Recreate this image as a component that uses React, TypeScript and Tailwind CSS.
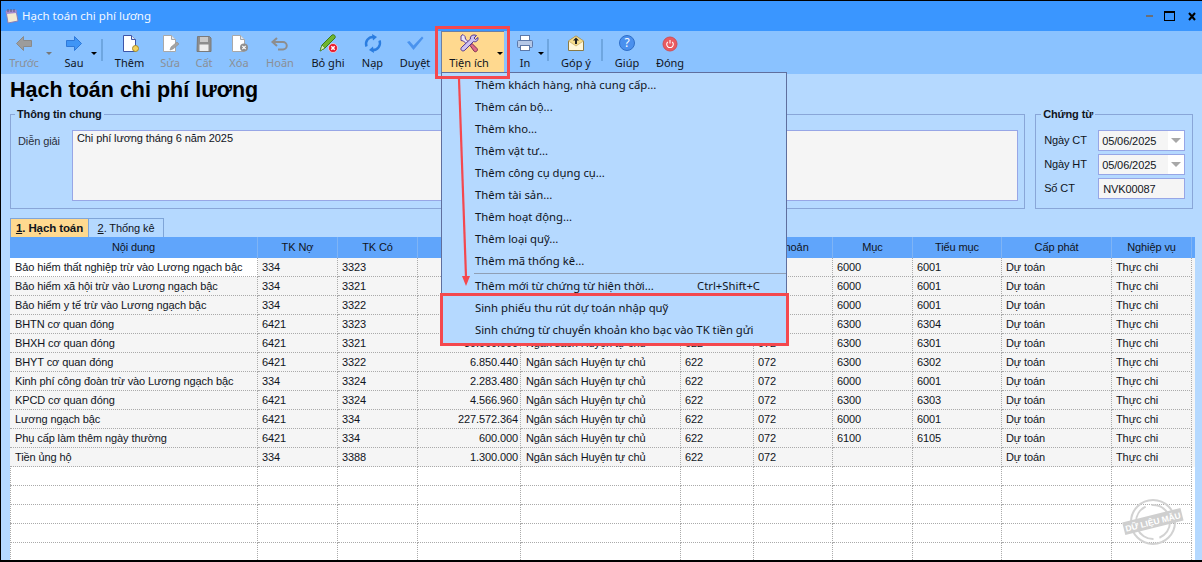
import type { ReactNode } from "react";

const COLS = "grid grid-cols-[248px_80px_80px_103px_160px_73px_79px_80px_89px_110px_80px]";

const NGUON = "Ngân sách Huyện tự chủ";

const ROWS = [
  ["Bảo hiểm thất nghiệp trừ vào Lương ngạch bậc", "334", "3323", "2.283.480", "6000", "6001"],
  ["Bảo hiểm xã hội trừ vào Lương ngạch bậc", "334", "3321", "18.267.840", "6000", "6001"],
  ["Bảo hiểm y tế trừ vào Lương ngạch bậc", "334", "3322", "3.425.220", "6000", "6001"],
  ["BHTN cơ quan đóng", "6421", "3323", "2.283.480", "6300", "6304"],
  ["BHXH cơ quan đóng", "6421", "3321", "39.960.900", "6300", "6301"],
  ["BHYT cơ quan đóng", "6421", "3322", "6.850.440", "6300", "6302"],
  ["Kinh phí công đoàn trừ vào Lương ngạch bậc", "334", "3324", "2.283.480", "6000", "6001"],
  ["KPCD cơ quan đóng", "6421", "3324", "4.566.960", "6300", "6303"],
  ["Lương ngạch bậc", "6421", "334", "227.572.364", "6000", "6001"],
  ["Phụ cấp làm thêm ngày thường", "6421", "334", "600.000", "6100", "6105"],
  ["Tiền ủng hộ", "334", "3388", "1.300.000", "", ""],
];

const HEADERS = ["Nội dung", "TK Nợ", "TK Có", "Số tiền", "Nguồn", "Chương", "Khoản", "Mục", "Tiểu mục", "Cấp phát", "Nghiệp vụ"];

const MENU_TOP = [
  "Thêm khách hàng, nhà cung cấp...",
  "Thêm cán bộ...",
  "Thêm kho...",
  "Thêm vật tư...",
  "Thêm công cụ dụng cụ...",
  "Thêm tài sản...",
  "Thêm hoạt động...",
  "Thêm loại quỹ...",
  "Thêm mã thống kê...",
];

function Ico({ children }: { children: ReactNode }) {
  return (
    <svg width="24" height="20" viewBox="0 0 24 20" fill="none">
      {children}
    </svg>
  );
}

function DocShape({ stroke }: { stroke: string }) {
  return (
    <>
      <path d="M5.500 2.500h8l4 4v12h-12z" fill="#fff" stroke={stroke} strokeWidth="1" />
      <path d="M13.500 2.500v4h4" fill="#dfe6f2" stroke={stroke} strokeWidth="1" />
    </>
  );
}

const ICONS: Record<string, ReactNode> = {
  prev: (
    <Ico>
      <path d="M4.500 10.500l7-7v4h8v6h-8v4z" fill="#9c9c9c" stroke="#8a8a8a" />
    </Ico>
  ),
  next: (
    <Ico>
      <path d="M19.500 10.500l-7-7v4h-8v6h8v4z" fill="#3f95f6" stroke="#2f78d8" />
    </Ico>
  ),
  add: (
    <Ico>
      <DocShape stroke="#3d55a8" />
      <circle cx="17.500" cy="15.500" r="3" fill="#f3d35a" stroke="#a58a2a" />
    </Ico>
  ),
  edit: (
    <Ico>
      <DocShape stroke="#a8a8a8" />
      <path d="M12 17l1-3 6-5 2 2-6 5z" fill="#a4a4a4" stroke="#8d8d8d" strokeWidth="0.6" />
    </Ico>
  ),
  save: (
    <Ico>
      <path d="M5.500 3.500h12l1.500 1.500v13.500H5z" fill="#8d8d8d" stroke="#7a7a7a" />
      <rect x="8" y="4" width="8" height="5" fill="#c9c9c9" />
      <rect x="7.500" y="11.500" width="9" height="6.500" fill="#ededed" />
    </Ico>
  ),
  del: (
    <Ico>
      <DocShape stroke="#a8a8a8" />
      <circle cx="17" cy="14.500" r="4" fill="#8f8f8f" />
      <path d="M15.300 12.800l3.400 3.400m0-3.400l-3.400 3.400" stroke="#fff" strokeWidth="1.200" />
    </Ico>
  ),
  undo: (
    <Ico>
      <path d="M9 5L4.500 9 9 13" stroke="#8d8d8d" strokeWidth="2" />
      <path d="M5 9h10a3.500 3.500 0 0 1 0 7.500H10" stroke="#8d8d8d" strokeWidth="2" />
    </Ico>
  ),
  skip: (
    <Ico>
      <path d="M4 18l2-6 10-10c2-1 4 1 3 3L9 15z" fill="#6fb52f" stroke="#3a7a1a" />
      <path d="M4 18l2-6 3 3z" fill="#d8ecb8" stroke="#3a7a1a" strokeWidth="0.6" />
      <circle cx="17" cy="15" r="4.500" fill="#e8192c" stroke="#fff" strokeWidth="0.6" />
      <path d="M15.300 13.300l3.400 3.400m0-3.400l-3.400 3.400" stroke="#fff" strokeWidth="1.500" />
    </Ico>
  ),
  reload: (
    <Ico>
      <path d="M5.500 13.500A7 7 0 0 1 12.500 4" stroke="#2b7de0" strokeWidth="2.400" />
      <path d="M11 1l5 3-4 3.500z" fill="#2b7de0" />
      <path d="M18.500 7.500a7 7 0 0 1-7 9.500" stroke="#2b7de0" strokeWidth="2.400" />
      <path d="M13 20l-5-3 4-3.500z" fill="#2b7de0" />
    </Ico>
  ),
  check: (
    <Ico>
      <path d="M4 9l2.500-1 4 4.500L19 3.500 20.500 5 10.500 17z" fill="#4a93ee" />
    </Ico>
  ),
  tools: (
    <Ico>
      <path d="M4 3l2-1.500 2 2 .5 2.500 5 5-2 2-5-5-2.500-.5z" fill="#ece6fa" stroke="#5b3f96" />
      <path d="M13 12.500l2-2 5 5c.8 1 .5 2-.3 2.700-.8.7-1.700.8-2.600 0z" fill="#e06a88" stroke="#7a3050" />
      <path d="M19.500 2.500L17 5l1.500 1.500L21 4.500c.5 3-2 5-4.500 4L8 17c-1 1-2.500 1.300-3.500.3S3.800 15 5 14l8.500-8c-1-3 2.500-5 6-3.500z" fill="#cfc2f0" stroke="#4f3590" />
    </Ico>
  ),
  print: (
    <Ico>
      <rect x="7.500" y="2.500" width="9" height="5" fill="#fff" stroke="#5d78a8" />
      <rect x="4.500" y="7.500" width="15" height="7" rx="1" fill="#b4c7e6" stroke="#5d78a8" />
      <rect x="7.500" y="12.500" width="9" height="5" fill="#fff" stroke="#5d78a8" />
    </Ico>
  ),
  mail: (
    <Ico>
      <path d="M4.500 8l7.500-5 7.500 5v9.500h-15z" fill="#fff6d8" stroke="#8a7a45" />
      <path d="M4.500 8l7.500 5 7.500-5-7.500-5z" fill="#f5dc8c" stroke="#b8a05a" strokeWidth="0.6" />
      <path d="M12 4.500l3 3h-2v3.500h-2V7.500H9z" fill="#222" />
    </Ico>
  ),
  power: (
    <Ico>
      <circle cx="12" cy="11" r="7" fill="#ea5a60" stroke="#cf5056" />
      <path d="M9.800 8.800a3.300 3.300 0 1 0 4.400 0" stroke="#fff" strokeWidth="1.100" />
      <path d="M12 7v3.500" stroke="#fff" strokeWidth="1.100" />
    </Ico>
  ),
};

function ToolButton({ label, icon, className, muted }: { label: string; icon: ReactNode; className: string; muted?: boolean }) {
  return (
    <div className={`flex flex-col items-center pt-[2px] shrink-0 ${className}`}>
      {icon}
      <span className={`mt-[2px] leading-[15px] whitespace-nowrap ${muted ? "text-[#8b8f96]" : "text-[#10141c]"}`}>{label}</span>
    </div>
  );
}

function Caret({ className = "", muted }: { className?: string; muted?: boolean }) {
  return (
    <div className={`w-0 h-0 border-x-[3px] border-t-[3px] border-x-transparent shrink-0 ${muted ? "border-t-[#777]" : "border-t-black"} ${className}`} />
  );
}

function Sep({ className }: { className: string }) {
  return <div className={`w-[2px] h-[22px] mt-[8px] bg-[#6ea6e0] shrink-0 ${className}`} />;
}

function DateInput({ value }: { value: string }) {
  return (
    <div className="w-[87px] h-[21px] border border-[#97a6e6] bg-white flex">
      <div className="w-[69px] bg-[#f5f5f5] pl-[3px] leading-[20px]">{value}</div>
      <div className="flex-1 flex items-center justify-center">
        <div className="w-0 h-0 border-x-[5px] border-t-[5px] border-x-transparent border-t-[#a8a8a8]" />
      </div>
    </div>
  );
}

function Stamp() {
  return (
    <svg className="absolute left-[1120px] top-[495px]" width="64" height="52" viewBox="0 0 64 52" fill="none">
      <circle cx="32" cy="26" r="22" stroke="#d2d2d2" strokeWidth="2" />
      <circle cx="32" cy="26" r="17" stroke="#d2d2d2" strokeWidth="2" strokeDasharray="20 6" />
      <g transform="rotate(-14 32 26)">
        <rect x="2" y="19" width="60" height="13" fill="#cfcfcf" />
        <text x="32" y="29" textAnchor="middle" fontSize="8.500" fontWeight="700" fill="#fff" fontFamily="Liberation Sans, sans-serif">DỮ LIỆU MẪU</text>
      </g>
    </svg>
  );
}

export default function App() {
  return (
    <div className="relative w-[1202px] h-[562px] overflow-hidden flex flex-col bg-[#b5d9ff] border-t border-l border-b-2 border-black text-[11px] text-[#10141c] font-['Liberation_Sans',sans-serif]">
      {/* title bar */}
      <div className="h-[30px] shrink-0 bg-[#3a96ff] flex items-center pl-[3px] pr-[6px]">
        <svg width="15" height="16" viewBox="0 0 15 16" fill="none">
          <path d="M2 3l10-1 2 11-10 2z" fill="#f3ead0" stroke="#8a7fb8" />
          <path d="M2 3l10-1 .5 3-10 1z" fill="#a48ad0" />
          <path d="M4 1v3M7 1v3M10 1v3" stroke="#5a5a7a" />
        </svg>
        <span className="ml-[3px] text-[11.500px] text-[#f2f8ff] font-['Noto_Sans',sans-serif]">Hạch toán chi phí lương</span>
        <div className="ml-auto flex items-center">
          <div className="w-[7px] h-[2px] bg-[#6a6f78]" />
          <div className="ml-[11px] w-[11px] h-[10px] border border-black border-t-[2px]" />
          <svg className="ml-[13px]" width="8" height="9" viewBox="0 0 8 9">
            <path d="M1 1l6 7m0-7L1 8" stroke="#000" strokeWidth="2" />
          </svg>
        </div>
      </div>

      {/* toolbar */}
      <div className="h-[43px] shrink-0 bg-[#8ac2ff] flex pl-[2px] font-['Noto_Sans',sans-serif]">
        <ToolButton label="Trước" icon={ICONS.prev} className="w-[42px]" muted />
        <Caret muted className="mt-[21px] ml-[1px] mr-[4px]" />
        <ToolButton label="Sau" icon={ICONS.next} className="w-[36px]" />
        <Caret className="mt-[21px] -ml-[1px] mr-[4px]" />
        <Sep className="mr-[6px]" />
        <ToolButton label="Thêm" icon={ICONS.add} className="w-[41px]" />
        <ToolButton label="Sửa" icon={ICONS.edit} className="w-[40px]" muted />
        <ToolButton label="Cất" icon={ICONS.save} className="w-[28px]" muted />
        <ToolButton label="Xóa" icon={ICONS.del} className="w-[42px]" muted />
        <ToolButton label="Hoãn" icon={ICONS.undo} className="w-[40px]" muted />
        <ToolButton label="Bỏ ghi" icon={ICONS.skip} className="w-[56px]" />
        <ToolButton label="Nạp" icon={ICONS.reload} className="w-[33px]" />
        <ToolButton label="Duyệt" icon={ICONS.check} className="w-[52px]" />
        <div className="relative w-[63px] shrink-0 bg-[#ffd98f] border-t border-l border-[#6f7fa0] flex flex-col items-center pt-[1px] pr-[8px]">
          {ICONS.tools}
          <span className="mt-[2px] leading-[15px] whitespace-nowrap">Tiện ích</span>
          <Caret className="absolute left-[55px] top-[20px]" />
        </div>
        <ToolButton label="In" icon={ICONS.print} className="w-[30px] ml-[6px]" />
        <Caret className="mt-[21px] -ml-[2px] mr-[2px]" />
        <Sep className="ml-[1px] mr-[4px]" />
        <ToolButton label="Góp ý" icon={ICONS.mail} className="w-[46px]" />
        <Sep className="ml-[2px] mr-[4px]" />
        <ToolButton label="Giúp" icon={
          <div className="w-[16px] h-[16px] mt-[2px] mb-[2px] rounded-full bg-[#4a90ee] border border-[#2f6fc8] text-white text-[12px] leading-[14px] text-center">?</div>
        } className="w-[40px]" />
        <ToolButton label="Đóng" icon={ICONS.power} className="w-[44px] ml-[1px]" />
      </div>

      {/* page */}
      <div className="flex-1 min-h-0 flex flex-col pl-[9px] tracking-[-0.1px]">
        <h1 className="h-[33px] shrink-0 text-[21.500px] tracking-normal leading-[33px] font-bold text-black">Hạch toán chi phí lương</h1>

        <div className="h-[103px] shrink-0 flex gap-[10px] pr-[9px]">
          <fieldset className="w-[1016px] h-[102px] -mb-px border border-[#89a6d8] pl-[3px]">
            <legend className="ml-[1px] px-[2px] font-bold leading-[14px]">Thông tin chung</legend>
            <div className="flex mt-[9px]">
              <span className="w-[58px] pl-[4px] pt-[3px] text-[#2a2f3a]">Diễn giải</span>
              <div className="w-[946px] h-[71px] border border-[#97a6e6] bg-[#f5f5f5] pl-[4px] leading-[14px]">Chi phí lương tháng 6 năm 2025</div>
            </div>
          </fieldset>
          <fieldset className="w-[158px] h-[102px] border border-[#89a6d8] pl-[8px]">
            <legend className="ml-[-3px] px-[2px] font-bold leading-[14px]">Chứng từ</legend>
            <div className="mt-[9px] flex flex-col gap-[3px]">
              <div className="flex items-center">
                <span className="w-[54px]">Ngày CT</span>
                <DateInput value="05/06/2025" />
              </div>
              <div className="flex items-center">
                <span className="w-[54px]">Ngày HT</span>
                <DateInput value="05/06/2025" />
              </div>
              <div className="flex items-center">
                <span className="w-[54px]">Số CT</span>
                <div className="w-[87px] h-[21px] border border-[#97a6e6] bg-[#f5f5f5] pl-[4px] leading-[20px]">NVK00087</div>
              </div>
            </div>
          </fieldset>
        </div>

        {/* tabs */}
        <div className="h-[19px] mt-[8px] shrink-0 flex">
          <div className="w-[79px] bg-[#ffd98f] border border-b-0 border-[#7fa5d8] text-[11.500px] font-bold text-center leading-[18px]">
            <span className="underline">1</span>. Hạch toán
          </div>
          <div className="w-[75px] border-t border-r border-[#7fa5d8] text-center leading-[18px]">
            <span className="underline">2</span>. Thống kê
          </div>
        </div>

        {/* grid */}
        <div className="w-[1185px] flex-1 min-h-0 overflow-hidden bg-white">
          <div className={`${COLS} h-[21px] bg-[#60a5fb]`}>
            {HEADERS.map((h) => (
              <div key={h} className="text-center leading-[21px] border-r border-[#7fb4f5]">{h}</div>
            ))}
          </div>
          <div className="border-l border-dotted border-[#aaa]">
            {ROWS.map((r, i) => (
              <div key={r[0]} className={`${COLS} h-[19px] leading-[18px] bg-[#f5f5f5] -ml-px`}>
                <div className={`pl-[5px] border-r border-b border-dotted border-[#aaa] whitespace-nowrap ${i === 0 ? "bg-white" : ""}`}>{r[0]}</div>
                <div className="pl-[4px] border-r border-b border-dotted border-[#aaa]">{r[1]}</div>
                <div className="pl-[4px] border-r border-b border-dotted border-[#aaa]">{r[2]}</div>
                <div className="pr-[2px] text-right border-r border-b border-dotted border-[#aaa]">{r[3]}</div>
                <div className="pl-[5px] border-r border-b border-dotted border-[#aaa] whitespace-nowrap">{NGUON}</div>
                <div className="pl-[4px] border-r border-b border-dotted border-[#aaa]">622</div>
                <div className="pl-[4px] border-r border-b border-dotted border-[#aaa]">072</div>
                <div className="pl-[4px] border-r border-b border-dotted border-[#aaa]">{r[4]}</div>
                <div className="pl-[4px] border-r border-b border-dotted border-[#aaa]">{r[5]}</div>
                <div className="pl-[4px] border-r border-b border-dotted border-[#aaa]">Dự toán</div>
                <div className="pl-[4px] border-r border-b border-dotted border-[#aaa]">Thực chi</div>
              </div>
            ))}
            {[0, 1, 2, 3, 4, 5].map((n) => (
              <div key={n} className={`${COLS} h-[19px] -ml-px`}>
                {HEADERS.map((h) => (
                  <div key={h} className="border-r border-b border-dotted border-[#aaa]" />
                ))}
              </div>
            ))}
          </div>
        </div>
      </div>

      {/* dropdown menu */}
      <div className="absolute left-[440px] top-[71px] w-[346px] h-[274px] bg-[#b5d9ff] border-x border-t border-[#5f6f9e] pt-[1px] text-[11.300px] font-['Noto_Sans',sans-serif]">
        {MENU_TOP.map((m) => (
          <div key={m} className="h-[22px] pl-[33px] leading-[22px]">{m}</div>
        ))}
        <div className="ml-[32px] h-px mt-[1px] mb-[1px] bg-[#8f9fb5]" />
        <div className="h-[22px] pl-[33px] pr-[26px] leading-[22px] flex justify-between">
          <span>Thêm mới từ chứng từ hiện thời...</span>
          <span>Ctrl+Shift+C</span>
        </div>
        <div className="h-[22px] pl-[33px] leading-[22px]">Sinh phiếu thu rút dự toán nhập quỹ</div>
        <div className="h-[22px] pl-[33px] leading-[22px]">Sinh chứng từ chuyển khoản kho bạc vào TK tiền gửi</div>
      </div>

      {/* red callouts */}
      <div className="absolute left-[434px] top-[25px] w-[75px] h-[53px] border-[3px] border-[#f4484e]" />
      <div className="absolute left-[439px] top-[292px] w-[349px] h-[53px] border-[3px] border-[#f4484e]" />
      <svg className="absolute left-[450px] top-[76px]" width="24" height="212" viewBox="0 0 24 212" fill="none">
        <path d="M8 2l7 198" stroke="#f4484e" strokeWidth="2.200" />
        <path d="M11 199l8 0-4 10z" fill="#f4484e" />
      </svg>

      <Stamp />
    </div>
  );
}
